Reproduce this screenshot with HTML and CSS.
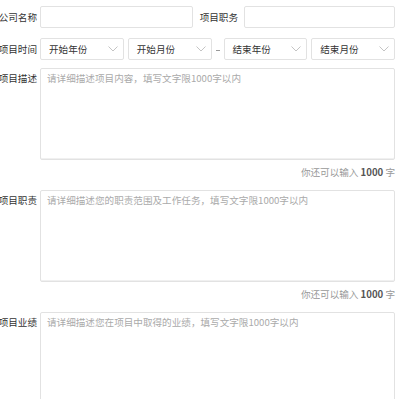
FILE: index.html
```html
<!DOCTYPE html>
<html lang="zh-CN">
<head>
<meta charset="utf-8">
<title>项目经历</title>
<link rel="stylesheet" href="styles.css">
</head>
<body>
<form class="form">
  <div class="row">
    <label class="label">公司名称</label>
    <input class="input input-company" type="text">
    <label class="label label-second">项目职务</label>
    <input class="input input-role" type="text">
  </div>
  <div class="row row-time">
    <label class="label">项目时间</label>
    <div class="selects">
      <div class="select"><span>开始年份</span><svg class="chev" width="10" height="6" viewBox="0 0 10 6"><path d="M0.5 0.5 L5 5 L9.5 0.5" fill="none" stroke="#c4c4c4" stroke-width="1"/></svg></div>
      <div class="select"><span>开始月份</span><svg class="chev" width="10" height="6" viewBox="0 0 10 6"><path d="M0.5 0.5 L5 5 L9.5 0.5" fill="none" stroke="#c4c4c4" stroke-width="1"/></svg></div>
      <span class="dash"></span>
      <div class="select"><span>结束年份</span><svg class="chev" width="10" height="6" viewBox="0 0 10 6"><path d="M0.5 0.5 L5 5 L9.5 0.5" fill="none" stroke="#c4c4c4" stroke-width="1"/></svg></div>
      <div class="select"><span>结束月份</span><svg class="chev" width="10" height="6" viewBox="0 0 10 6"><path d="M0.5 0.5 L5 5 L9.5 0.5" fill="none" stroke="#c4c4c4" stroke-width="1"/></svg></div>
    </div>
  </div>
  <div class="block">
    <div class="row row-area">
      <label class="label label-area">项目描述</label>
      <textarea class="area" placeholder="请详细描述项目内容，填写文字限1000字以内"></textarea>
    </div>
    <p class="counter">你还可以输入 <b>1000</b> 字</p>
  </div>
  <div class="block">
    <div class="row row-area">
      <label class="label label-area">项目职责</label>
      <textarea class="area" placeholder="请详细描述您的职责范围及工作任务，填写文字限1000字以内"></textarea>
    </div>
    <p class="counter">你还可以输入 <b>1000</b> 字</p>
  </div>
  <div class="block">
    <div class="row row-area">
      <label class="label label-area">项目业绩</label>
      <textarea class="area" placeholder="请详细描述您在项目中取得的业绩，填写文字限1000字以内"></textarea>
    </div>
  </div>
</form>
</body>
</html>
```

FILE: styles.css
```css
* { box-sizing: border-box; }

html, body {
  margin: 0;
  padding: 0;
  background: #ffffff;
  overflow: hidden;
}

body {
  font-family: "Noto Sans CJK SC", "Noto Sans", sans-serif;
  font-size: 9.6px;
  color: #333333;
}

.form {
  display: flex;
  flex-direction: column;
  padding: 6px 20px 0 0;
  margin: 0;
}

.row {
  display: flex;
  align-items: center;
  height: 22px;
}

.row-time {
  margin-top: 10px;
}

.label {
  flex: none;
  width: 37px;
  margin-right: 3px;
  display: flex;
  justify-content: flex-end;
  white-space: nowrap;
  line-height: 13px;
  color: #333333;
}

.label-second {
  width: 36px;
  margin-left: 9px;
  margin-right: 6px;
}

.input {
  height: 22px;
  border: 1px solid #e2e2e2;
  border-radius: 2px;
  background: #fff;
  padding: 0 6px;
  font: inherit;
  outline: none;
}

.input-company {
  width: 153px;
  flex: none;
}

.input-role {
  flex: 1;
  min-width: 0;
}

.selects {
  flex: 1;
  display: flex;
  align-items: center;
  gap: 4px;
  height: 22px;
}

.select {
  flex: 1;
  min-width: 0;
  height: 22px;
  border: 1px solid #e2e2e2;
  border-radius: 2px;
  display: flex;
  align-items: center;
  justify-content: space-between;
  padding: 0 5px 0 8px;
  color: #333333;
}

.chev {
  display: block;
  flex: none;
}

.dash {
  flex: none;
  width: 4px;
  height: 1px;
  background: #999999;
  margin-top: 2px;
}

.block {
  display: flex;
  flex-direction: column;
  margin-top: 8px;
}

.block + .block {
  margin-top: 12px;
}

.row-area {
  height: auto;
  align-items: flex-start;
}

.label-area {
  padding-top: 4px;
}

.area {
  flex: 1;
  min-width: 0;
  height: 92px;
  margin: 0;
  border: 1px solid #e2e2e2;
  border-radius: 2px;
  box-shadow: inset 0 -1px 0 #f0f0f0;
  padding: 3px 6px;
  font: inherit;
  line-height: 13px;
  resize: none;
  outline: none;
  color: #333;
}

.area::placeholder {
  color: #aaaaaa;
}

.counter {
  margin: 6px 0 0 0;
  text-align: right;
  line-height: 12px;
  color: #999999;
}

.counter b {
  color: #555555;
  font-weight: bold;
}
```
